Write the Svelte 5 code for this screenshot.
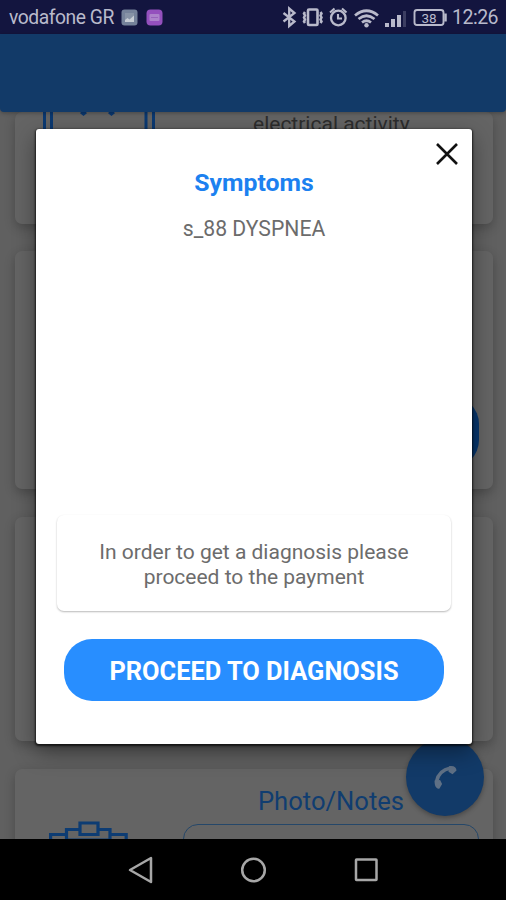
<script lang="ts">
	export let carrier = 'vodafone GR';
	export let time = '12:26';
	export let battery = 38;
	export let symptoms: string[] = ['s_88 DYSPNEA'];

	let modalOpen = true;
</script>

<div class="screen">
	<header class="status-bar">
		<span class="carrier">{carrier}</span>
		<svg class="notification" width="17" height="17" viewBox="0 0 17 17">
			<rect x="0.5" y="0.5" width="16" height="16" rx="3" fill="#75829a" />
			<path d="M4 4h9v9H4z" fill="#8793a6" />
			<path d="M4 13v-2l2.500-2 2 1.500L13 6.500V13z" fill="#c6ccd4" />
		</svg>
		<svg class="notification second" width="17" height="17" viewBox="0 0 17 17">
			<rect x="0.500" y="0.500" width="16" height="16" rx="4" fill="#9450bd" />
			<rect x="3.500" y="5" width="10" height="7" rx="1" fill="#ad83cb" />
			<path d="M5 8.500h7" stroke="#9863bc" stroke-width="1" />
		</svg>
		<!-- bluetooth, vibrate, alarm, wifi, signal, battery -->
		<svg class="indicators" width="170" height="24" viewBox="0 0 170 24" fill="none" stroke="#b9bacb">
			<path d="M3.500 8l11 8.500-5.300 4.500V3.500l5.300 4.500-11 8.500" stroke-width="2.300" />
			<rect x="28" y="4.500" width="9.500" height="15.500" rx="1" stroke-width="2.600" />
			<path d="M25 7l-1 1.500 1 2-1 2 1 2-1 2 1 1.500M40.500 7l1 1.500-1 2 1 2-1 2 1 2-1 1.500" stroke-width="2.500" />
			<circle cx="58.300" cy="13" r="7.300" stroke-width="2.300" />
			<path d="M58 9v4.500h4M50 7.500l4.500-4M66.500 7.500l-4.500-4" stroke-width="2.100" />
			<path d="M75 10.500Q86.500 1 98 10.500M78.500 14Q86.500 7.500 94.500 14M82 17.500Q86.500 14 91 17.500" stroke-width="2.700" />
			<circle cx="86.500" cy="20.300" r="2.200" fill="#b9bacb" stroke="none" />
			<g fill="#b9bacb" stroke="none">
				<rect x="105" y="18" width="4" height="4" />
				<rect x="111" y="14" width="4" height="8" />
				<rect x="117" y="10" width="4" height="12" />
				<rect x="123" y="6" width="3" height="16" opacity="0.25" />
			</g>
			<rect x="134.500" y="5" width="29" height="15" rx="2.500" stroke-width="1.900" />
			<path d="M165.500 8.500v8" stroke-width="2.500" />
			<text x="149" y="17.500" text-anchor="middle" class="battery">{battery}</text>
		</svg>
		<span class="clock">{time}</span>
	</header>

	<div class="app-bar"></div>

	<main class="content">
		<section class="card ecg">
			<svg class="ecg-icon" width="114" height="20" viewBox="0 0 114 20" fill="none" stroke="#0b3971">
				<path d="M2.500 0v20M9.500 0v20M104 0v20M111.500 0v20" stroke-width="3" />
				<path d="M39 0l2.500 2 2.500-2M67 0l2.500 2 2.500-2" stroke-width="3" />
			</svg>
			<p>electrical activity</p>
		</section>
		<section class="card second-card">
			<div class="card-button"></div>
		</section>
		<section class="card third-card"></section>
		<section class="card notes">
			<svg class="notes-icon" width="80" height="22" viewBox="0 0 80 22" fill="none" stroke="#0d3c73" stroke-width="3.200">
				<path d="M2.600 22v-7.500H18.500M18.500 20V9.500H32M50 9.500h12V20M62 14.500h16.200V22" />
				<path d="M32 3h18v11.500H32zM17 20h46" />
			</svg>
			<div class="notes-body">
				<h3>Photo/Notes</h3>
				<div class="notes-field"></div>
			</div>
		</section>
	</main>

	<button class="fab" aria-label="Call">
		<svg width="28" height="28" viewBox="0 0 28 28">
			<path d="M5.500 18.500C7 11 12 6.500 19.500 5" fill="none" stroke="#5f7085" stroke-width="3.500" />
			<path
				d="M3.600 17.500l5.500-.5 2 4-2.600 4.500c-3 1-5.200-2.500-4.900-8zM18 3.200c4.500-1 7.500.8 7.500 4.300l-4 3.700-4-2.400z"
				fill="#5f7085"
			/>
		</svg>
	</button>

	{#if modalOpen}
		<div class="modal" role="dialog" aria-label="Symptoms">
			<button class="close" aria-label="Close" on:click={() => (modalOpen = false)}>
				<svg width="24" height="24" viewBox="0 0 24 24">
					<path d="M2 2l20 20M22 2L2 22" stroke="#111" stroke-width="2.600" />
				</svg>
			</button>
			<h2>Symptoms</h2>
			<div class="symptom-list">
				{#each symptoms as symptom}
					<p>{symptom}</p>
				{/each}
			</div>
			<div class="notice">
				<span>In order to get a diagnosis please</span>
				<span>proceed to the payment</span>
			</div>
			<button class="proceed"><span>PROCEED TO DIAGNOSIS</span></button>
		</div>
	{/if}

	<footer class="nav-bar">
		<svg width="28" height="28" viewBox="0 0 28 28"><path d="M24 2v24L3 14z" /></svg>
		<svg width="28" height="28" viewBox="0 0 28 28"><circle cx="14.5" cy="14" r="11.300" /></svg>
		<svg width="28" height="28" viewBox="0 0 28 28"><rect x="4" y="3.500" width="20.500" height="20.500" rx="0.500" /></svg>
	</footer>
</div>

<style>
	:global(body) {
		margin: 0;
	}

	.screen {
		position: relative;
		display: flex;
		flex-direction: column;
		width: 506px;
		height: 900px;
		overflow: hidden;
		background: #606060;
		font-family: Roboto, sans-serif;
	}

	h2,
	h3,
	p {
		margin: 0;
		font-weight: 400;
	}

	button {
		border: none;
		padding: 0;
		font-family: inherit;
		cursor: pointer;
	}

	svg {
		display: block;
	}

	.status-bar {
		display: flex;
		align-items: center;
		flex: none;
		box-sizing: border-box;
		height: 34px;
		padding: 0 8px 0 9px;
		background: #13153f;
		color: #b9bacb;
	}

	.carrier {
		width: 112px;
		font-size: 19.3px;
		letter-spacing: -0.45px;
		white-space: nowrap;
	}

	.notification.second {
		margin-left: 8px;
	}

	.indicators {
		margin-right: 2px;
		margin-left: auto;
	}

	.battery {
		font-family: Roboto, sans-serif;
		font-size: 13.5px;
		fill: #b9bacb;
		stroke: none;
	}

	.clock {
		width: 46px;
		font-size: 19.5px;
		letter-spacing: -0.5px;
		white-space: nowrap;
	}

	.app-bar {
		z-index: 1;
		flex: none;
		height: 78px;
		background: #123a68;
		border-radius: 0 0 4px 4px;
		box-shadow: 0 1px 4px rgba(0, 0, 0, 0.3);
	}

	.content {
		display: flex;
		flex-direction: column;
		gap: 28px;
		height: 727px;
		padding: 0 13px 0 15px;
		overflow: hidden;
	}

	.card {
		display: flex;
		flex: none;
		box-sizing: border-box;
		border-radius: 7px;
		background: #646464;
		box-shadow: 0 4px 11px rgba(0, 0, 0, 0.24);
	}

	.ecg {
		height: 112px;
		padding-left: 27px;
	}

	.ecg p {
		margin-left: 97px;
		color: #2d2d2d;
		font-size: 21px;
		line-height: 24px;
		white-space: nowrap;
	}

	.second-card {
		justify-content: flex-end;
		align-items: flex-start;
		height: 238px;
		margin-top: -1px;
		padding: 145px 14px 0;
	}

	.card-button {
		width: 290px;
		height: 72px;
		border-radius: 28px;
		background: #06366e;
	}

	.third-card {
		height: 224px;
	}

	.notes {
		height: 240px;
		padding: 51px 14px 0 33px;
	}

	.notes-body {
		flex: 1;
		margin-left: 55px;
	}

	.notes-body h3 {
		margin-top: -34px;
		color: #103d70;
		font-size: 25.6px;
		line-height: 30px;
		text-align: center;
	}

	.notes-field {
		height: 100px;
		margin-top: 8px;
		border: 1.5px solid #254769;
		border-radius: 15px;
	}

	.fab {
		position: absolute;
		top: 738px;
		left: 406px;
		display: flex;
		align-items: center;
		justify-content: center;
		width: 78px;
		height: 78px;
		border-radius: 50%;
		background: #123a68;
		box-shadow: 0 2px 5px rgba(0, 0, 0, 0.3);
	}

	.modal {
		position: absolute;
		top: 129px;
		left: 36px;
		z-index: 2;
		display: flex;
		flex-direction: column;
		box-sizing: border-box;
		width: 436px;
		height: 615px;
		padding: 9px 21px 43px;
		border-radius: 3px;
		background: #fff;
		box-shadow:
			0 1px 2px 1px rgba(0, 0, 0, 0.65),
			0 8px 22px rgba(0, 0, 0, 0.4);
	}

	.close {
		align-self: flex-end;
		width: 24px;
		height: 24px;
		margin-top: 4px;
		margin-right: -8px;
		background: transparent;
	}

	.modal h2 {
		margin-top: 2px;
		color: #1c81f0;
		font-size: 24.8px;
		font-weight: 700;
		line-height: 30px;
		text-align: center;
	}

	.symptom-list {
		flex: 1;
		margin-top: 17px;
		color: #6c6c6c;
		font-size: 21.2px;
		line-height: 28px;
		text-align: center;
	}

	.notice {
		display: flex;
		flex-direction: column;
		align-items: center;
		box-sizing: border-box;
		height: 96px;
		padding-top: 25px;
		border-radius: 7px;
		background: #fff;
		box-shadow: 0 1px 2px rgba(0, 0, 0, 0.28);
		color: #6c6c6c;
		font-size: 21px;
		line-height: 24.5px;
		white-space: nowrap;
	}

	.proceed {
		height: 62px;
		margin: 28px 7px 0;
		padding-top: 2px;
		border-radius: 28px;
		background: #288eff;
		color: #fff;
		font-size: 25.4px;
		font-weight: 700;
	}

	.proceed span {
		white-space: nowrap;
	}

	.nav-bar {
		z-index: 1;
		display: flex;
		justify-content: center;
		align-items: center;
		flex: none;
		gap: 84.5px;
		height: 61px;
		background: #000;
	}

	.nav-bar svg {
		fill: none;
		stroke: #a7a7a7;
		stroke-width: 2.5;
		stroke-linejoin: round;
	}
</style>
